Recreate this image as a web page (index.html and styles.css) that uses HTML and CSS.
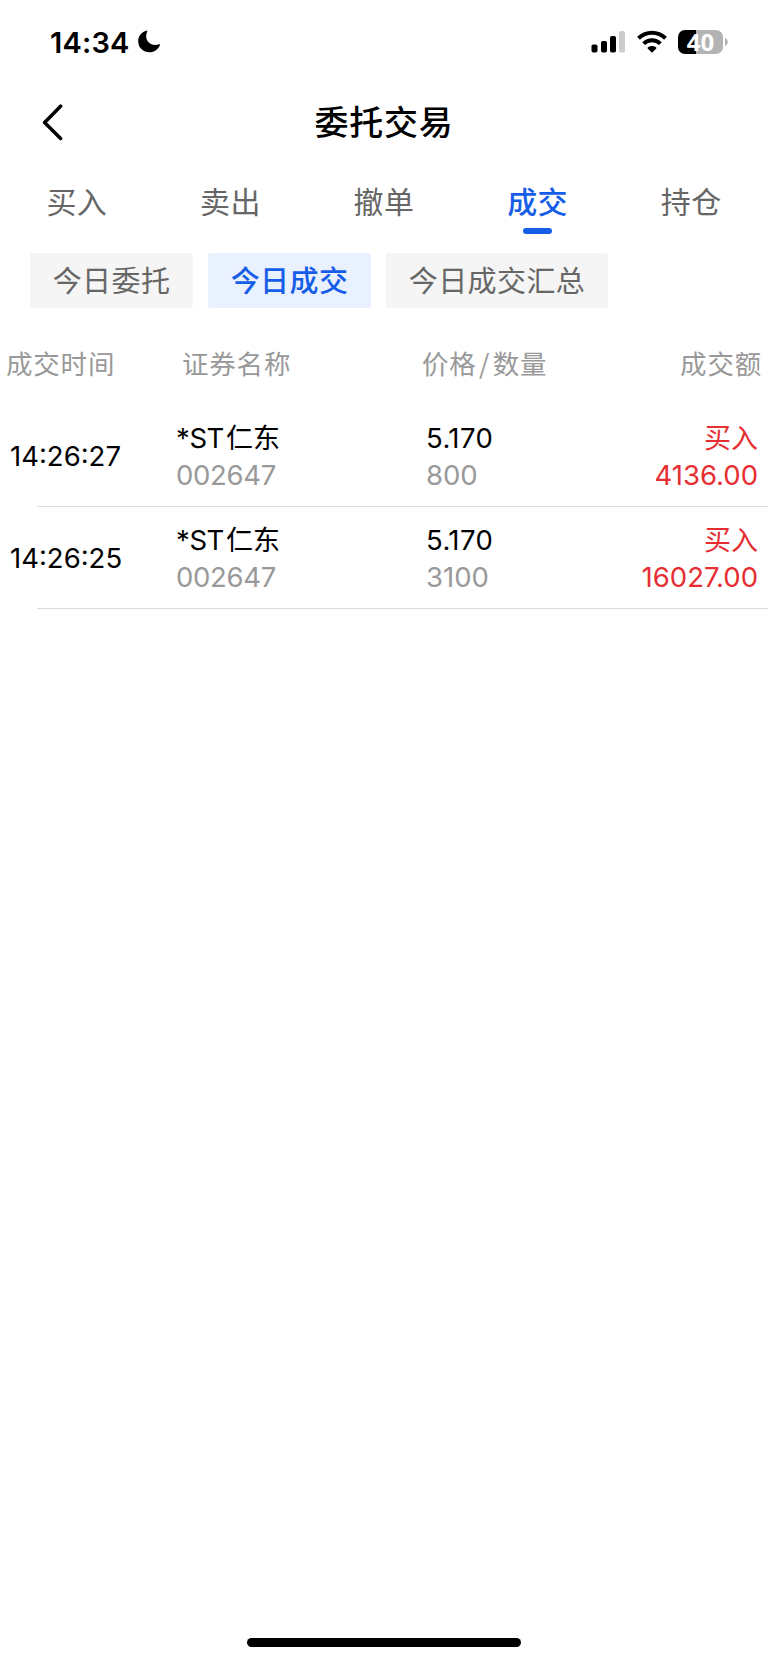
FILE: index.html
```html
<!DOCTYPE html>
<html lang="zh-CN">
<head>
<meta charset="utf-8">
<title>委托交易</title>
<link rel="stylesheet" href="styles.css">
</head>
<body>
<div class="screen">
  <header class="status">
    <div class="status-left">
      <span class="clock">14:34</span>
      <svg class="moon" width="23" height="23" viewBox="0 0 24 24"><path d="M9.2 .6C3.7 2.1.2 6.4.2 11.700A11.600 11.600 0 0 0 11.800 23.300C17 23.300 21.200 20.500 22.900 15.700C23.200 14.800 22.500 14.600 21.900 14.900C15.300 17.500 8.600 13.500 8.500 6.600C8.500 4.800 9 3 9.600 1.500C9.900.8 9.700.5 9.200.6Z"/></svg>
    </div>
    <div class="status-right">
      <svg class="signal" width="36" height="24" viewBox="0 0 36 24"><rect x=".5" y="14.500" width="6" height="8" rx="1.800"/><rect x="10" y="11" width="6" height="11.500" rx="1.800"/><rect x="19" y="6" width="6" height="16.500" rx="1.800"/><rect class="dim" x="28" y="1" width="6" height="21.500" rx="1.800"/></svg>
      <svg class="wifi" width="30" height="24" viewBox="0 0 30 24"><path class="arc" d="M1.500 8.300C9.200 .8 20.800 .8 28.500 8.300"/><path class="arc" d="M6.600 13.600C11.500 9 18.500 9 23.400 13.600"/><path d="M15 22.800L19.100 18.700C19.600 18.200 19.500 17.500 19 17.200C16.600 15.500 13.400 15.500 11 17.200C10.500 17.500 10.400 18.200 10.900 18.700Z"/></svg>
      <div class="battery"><span class="level">40</span><svg class="cap" width="3" height="8" viewBox="0 0 3 8"><path d="M0 0C3.700 1.500 3.700 6.500 0 8Z"/></svg></div>
    </div>
  </header>
  <nav class="titlebar">
    <svg class="back" width="22" height="37" viewBox="0 0 22 37"><path d="M18.600 2.200L2.600 18.500L18.600 34.500"/></svg>
    <h1 class="title">委托交易</h1>
  </nav>
  <nav class="tabs">
    <span class="tab">买入</span><span class="tab">卖出</span><span class="tab">撤单</span><span class="tab active">成交</span><span class="tab">持仓</span>
  </nav>
  <div class="chips">
    <span class="chip">今日委托</span><span class="chip selected">今日成交</span><span class="chip">今日成交汇总</span>
  </div>
  <div class="grid head">
    <span class="h-time">成交时间</span><span class="h-name">证券名称</span><span class="h-price">价格<i class="slash">/</i>数量</span><span class="h-total">成交额</span>
  </div>
  <main>
    <div class="grid row">
      <span class="time">14:26:27</span>
      <div class="cell"><div class="name">*ST<span class="cjk">仁东</span></div><div class="muted code">002647</div></div>
      <div class="cell"><div class="price">5.170</div><div class="muted">800</div></div>
      <div class="cell total"><div class="side">买入</div><div>4136.00</div></div>
    </div>
    <div class="grid row">
      <span class="time">14:26:25</span>
      <div class="cell"><div class="name">*ST<span class="cjk">仁东</span></div><div class="muted code">002647</div></div>
      <div class="cell"><div class="price">5.170</div><div class="muted">3100</div></div>
      <div class="cell total"><div class="side">买入</div><div>16027.00</div></div>
    </div>
  </main>
  <div class="home"></div>
</div>
</body>
</html>
```
FILE: styles.css
```css
* { box-sizing: border-box; }
body { margin: 0; background: #fff; color: #000; font-family: Inter, "Noto Sans CJK SC", sans-serif; }
.screen { display: flex; flex-direction: column; height: 1663px; overflow: hidden; }
.status { display: flex; justify-content: space-between; height: 84px; padding: 30px 40px 0 50px; }
.status-left, .status-right { display: flex; align-items: flex-start; }
.clock { width: 88px; font-size: 29px; font-weight: 600; line-height: 25px; letter-spacing: .2px; }
.signal { margin-right: 10px; }
.signal .dim { fill: #ccc; }
.wifi { margin-right: 11px; }
.wifi .arc { fill: none; stroke: #000; stroke-width: 4; }
.battery { display: flex; align-items: center; height: 24px; }
.level { width: 45px; height: 24px; border-radius: 7px; background: linear-gradient(90deg, #000 41%, #b3b3b3 41%); color: #fff; font: 700 24px/23px "Noto Sans", sans-serif; text-align: center; }
.cap { margin-left: 2px; fill: #b3b3b3; }
.titlebar { display: grid; grid-template-columns: 100px 1fr 100px; align-items: center; height: 76px; }
.back { margin-left: 42px; fill: none; stroke: #000; stroke-width: 3.500; stroke-linecap: round; stroke-linejoin: round; }
.title { margin: 0; padding-bottom: 2px; font: 500 34px/50px "Noto Sans CJK SC", sans-serif; letter-spacing: .8px; text-align: center; }
.tabs { display: grid; grid-template-columns: repeat(5, 1fr); height: 93px; padding-top: 19px; }
.tab { display: flex; flex-direction: column; align-items: center; color: #666; font: 400 30px/42px "Noto Sans CJK SC", sans-serif; letter-spacing: .4px; }
.active { color: #165ee8; font-weight: 500; }
.active::after { content: ""; width: 29px; height: 6px; margin-top: 7px; border-radius: 3px; background: #165ee8; }
.chips { display: flex; gap: 15px; height: 55px; padding-left: 30px; }
.chip { width: 163px; border-radius: 3px; background: #f5f5f5; color: #666; font: 400 29px/53px "Noto Sans CJK SC", sans-serif; letter-spacing: .4px; text-align: center; }
.chip:last-child { width: 222px; }
.selected { background: #eaf1fe; color: #165ee8; font-weight: 500; }
.grid { display: grid; grid-template-columns: 176px 250px 200px 1fr; }
.head { height: 97px; padding: 35px 0 0 6px; color: #999; font: 400 26.500px/40px "Noto Sans CJK SC", sans-serif; letter-spacing: .8px; }
.head .h-price { margin-left: -10px; }
.slash { margin: 0 2.500px; font-style: normal; }
.head .h-total { padding-right: 6px; text-align: right; }
.row { height: 102px; padding: 15px 10px 0; font-size: 27.500px; line-height: 37px; background: linear-gradient(#dcdcdc, #dcdcdc) 37px 100% / 100% 1px no-repeat; }
.time { padding-top: 18px; letter-spacing: 0; }
.cell { margin-left: -10px; }
.name { height: 37px; letter-spacing: -.4px; }
.muted { color: #999; }
.code { letter-spacing: -.3px; }
.cjk { margin-left: 2px; letter-spacing: 0; line-height: 30px; }
.cjk, .side { font-family: "Noto Sans CJK SC", sans-serif; font-size: 27px; }
.side { height: 37px; line-height: 33px; }
.price { letter-spacing: .4px; }
.total { color: #e62e32; text-align: right; }
.home { width: 274px; height: 9px; margin: auto auto 16px; border-radius: 5px; background: #000; }
```
